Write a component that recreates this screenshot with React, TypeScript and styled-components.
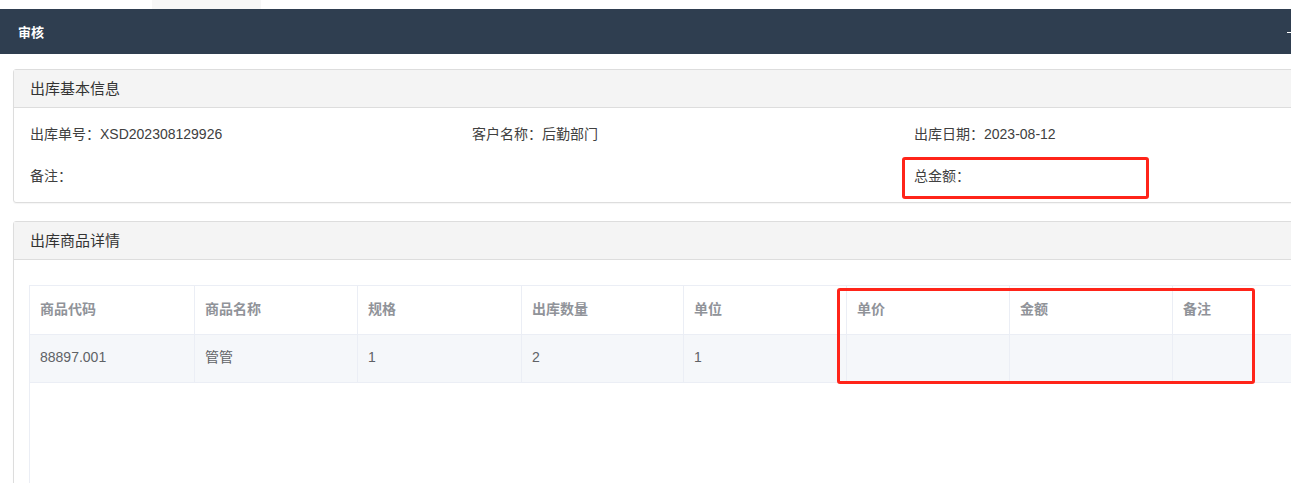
import React from 'react';
import styled, { createGlobalStyle } from 'styled-components';

const GlobalStyle = createGlobalStyle`
  html, body {
    margin: 0;
    padding: 0;
    background: #ffffff;
    overflow: hidden;
  }
  body {
    font-family: "Liberation Sans", "Noto Sans CJK SC", sans-serif;
    color: #333;
  }
`;

const TopStrip = styled.div`
  height: 9px;
  display: flex;
  padding-left: 152px;
`;

const GhostTab = styled.div`
  width: 109px;
  height: 9px;
  background: #f7f7f7;
`;

const TitleBar = styled.div`
  height: 45px;
  background: #2f3e50;
  display: flex;
  align-items: center;
  justify-content: space-between;
  padding-left: 18px;
  color: #fff;
`;

const TitleText = styled.span`
  font-size: 13px;
  font-weight: bold;
  margin-top: -1px;
`;

const Minimize = styled.span`
  width: 4px;
  height: 1px;
  background: #fff;
  margin-top: 2px;
`;

const Content = styled.div`
  padding: 15px 0 0 13px;
  width: 1360px;
`;

const Panel = styled.section<{ $gap?: number }>`
  border: 1px solid #dddddd;
  border-radius: 3px;
  margin-bottom: ${(p) => p.$gap ?? 0}px;
  box-shadow: 0 1px 1px rgba(0, 0, 0, 0.04);
`;

const PanelHeader = styled.div`
  height: 37px;
  line-height: 38px;
  background: #f4f4f4;
  border-bottom: 1px solid #dddddd;
  padding-left: 16px;
  font-size: 15px;
  color: #333;
`;

const InfoBody = styled.div`
  padding: 4px 16px 6px;
  display: grid;
  grid-template-columns: repeat(3, 442px);
  grid-auto-rows: 42px;
`;

const InfoItem = styled.div`
  position: relative;
  line-height: 44px;
  font-size: 14px;
  color: #404040;
`;

const Marker = styled.div<{ $l: number; $t: number; $w: number; $h: number }>`
  position: absolute;
  left: ${(p) => p.$l}px;
  top: ${(p) => p.$t}px;
  width: ${(p) => p.$w}px;
  height: ${(p) => p.$h}px;
  border: 3px solid #ff2419;
  border-radius: 3px;
  box-sizing: border-box;
  pointer-events: none;
`;

const TableBody = styled.div`
  padding: 25px 0 0 15px;
`;

const TableWrap = styled.div`
  position: relative;
  border-top: 1px solid #ebeef5;
  border-left: 1px solid #ebeef5;
  height: 260px;
`;

const Row = styled.div<{ $head?: boolean }>`
  display: grid;
  grid-template-columns: 165px 163px 164px 162px 163px 163px 163px 163px;
  height: ${(p) => (p.$head ? 48 : 47)}px;
  border-bottom: 1px solid #ebeef5;
  background: ${(p) => (p.$head ? '#ffffff' : '#f5f7fa')};
`;

const Cell = styled.div<{ $head?: boolean }>`
  padding: 0 10px;
  line-height: ${(p) => (p.$head ? 46 : 44)}px;
  font-size: 14px;
  border-right: 1px solid #ebeef5;
  color: ${(p) => (p.$head ? '#909399' : '#606266')};
  font-weight: ${(p) => (p.$head ? 'bold' : 'normal')};
`;

const columns = ['商品代码', '商品名称', '规格', '出库数量', '单位', '单价', '金额', '备注'];
const rows = [['88897.001', '管管', '1', '2', '1', '', '', '']];

export default function App() {
  return (
    <>
      <GlobalStyle />
      <TopStrip>
        <GhostTab />
      </TopStrip>
      <TitleBar>
        <TitleText>审核</TitleText>
        <Minimize />
      </TitleBar>
      <Content>
        <Panel $gap={18}>
          <PanelHeader>出库基本信息</PanelHeader>
          <InfoBody>
            <InfoItem>出库单号：XSD202308129926</InfoItem>
            <InfoItem>客户名称：后勤部门</InfoItem>
            <InfoItem>出库日期：2023-08-12</InfoItem>
            <InfoItem>备注：</InfoItem>
            <InfoItem />
            <InfoItem>
              总金额：
              <Marker $l={-12} $t={3} $w={247} $h={42} />
            </InfoItem>
          </InfoBody>
        </Panel>
        <Panel>
          <PanelHeader>出库商品详情</PanelHeader>
          <TableBody>
            <TableWrap>
              <Row $head>
                {columns.map((c) => (
                  <Cell $head key={c}>{c}</Cell>
                ))}
              </Row>
              {rows.map((r, i) => (
                <Row key={i}>
                  {r.map((v, j) => (
                    <Cell key={j}>{v}</Cell>
                  ))}
                </Row>
              ))}
              <Marker $l={807} $t={2} $w={418} $h={96} />
            </TableWrap>
          </TableBody>
        </Panel>
      </Content>
    </>
  );
}
